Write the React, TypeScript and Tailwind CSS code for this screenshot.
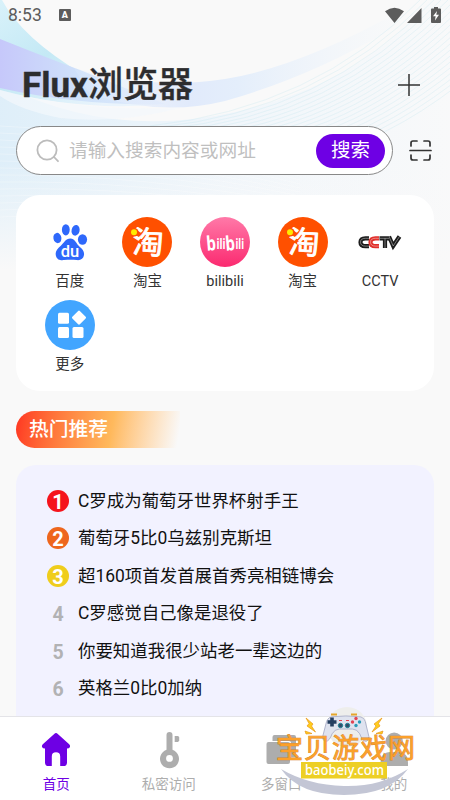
import type { ReactNode } from 'react';

const hotList = [
  'C罗成为葡萄牙世界杯射手王',
  '葡萄牙5比0乌兹别克斯坦',
  '超160项首发首展首秀亮相链博会',
  'C罗感觉自己像是退役了',
  '你要知道我很少站老一辈这边的',
  '英格兰0比0加纳',
];

const rankColors = ['bg-[#f5141c]', 'bg-[#ee661d]', 'bg-[#efcd1c]'];

export default function App() {
  return (
    <div className="relative flex h-[800px] w-[450px] flex-col overflow-hidden bg-[#f9f9f9] font-[Roboto,'Noto_Sans_CJK_SC',sans-serif]">
      <Waves />
      <StatusBar />

      <main className="relative flex min-h-0 flex-1 flex-col overflow-hidden px-4">
        <header className="flex h-[96px] items-center justify-between pt-[13px] pr-[13px] pl-[6px]">
          <h1 className="pt-0.5 text-[35px] leading-none font-bold text-[#2d2d2f] [-webkit-text-stroke:0.4px_#2d2d2f]">
            Flux<span className="font-medium">浏览器</span>
          </h1>
          <svg className="size-6" viewBox="0 0 24 24" stroke="#333" strokeWidth="1.5">
            <path d="M12 1v22M1 12h22" />
          </svg>
        </header>

        {/* Search */}
        <div className="flex items-center justify-between pr-0.5">
          <div className="flex h-[49px] w-[377px] items-center rounded-full border border-[#888] bg-white pr-[7px] pl-[19px]">
            <svg className="size-6" viewBox="0 0 24 24" fill="none" stroke="#bcbcbc" strokeWidth="1.8">
              <circle cx="11" cy="11" r="9.6" />
              <path d="m18 18 4 4.2" strokeLinecap="round" />
            </svg>
            <span className="ml-[9px] flex-1 pt-px text-[18.7px] leading-none whitespace-nowrap text-[#bfbfbf]">
              请输入搜索内容或网址
            </span>
            <button className="h-[34px] w-[69px] rounded-full bg-[#6e00e4] pt-px text-[19.5px] leading-none text-white">
              搜索
            </button>
          </div>
          <svg
            className="size-[23px]"
            viewBox="0 0 23 23"
            fill="none"
            stroke="#333"
            strokeWidth="1.7"
            strokeLinecap="round"
          >
            <path d="M2 7V4q0-2 2-2h4M15 2h4q2 0 2 2v3M2 16v3q0 2 2 2h4M15 21h4q2 0 2-2v-3M1 11.5h21" />
          </svg>
        </div>

        {/* Shortcuts */}
        <section className="mt-5 grid h-[196px] shrink-0 grid-cols-5 content-start rounded-[24px] bg-white px-[15px] pt-[22px]">
          <Shortcut label="百度">
            <BaiduLogo />
          </Shortcut>
          <Shortcut label="淘宝">
            <TaobaoLogo />
          </Shortcut>
          <Shortcut label="bilibili">
            <BilibiliLogo />
          </Shortcut>
          <Shortcut label="淘宝">
            <TaobaoLogo />
          </Shortcut>
          <Shortcut label="CCTV">
            <CctvLogo />
          </Shortcut>
          <Shortcut label="更多">
            <MoreLogo />
          </Shortcut>
        </section>

        <h2 className="mt-5 flex h-[37px] w-[164px] shrink-0 items-center rounded-l-full bg-linear-100 from-[#ff3322] via-[#ffb95c] via-58% to-[#f9f9f9] to-98% pl-[13px] text-[19.8px] leading-none font-medium text-white">
          热门推荐
        </h2>

        {/* Hot list */}
        <ol className="mt-[17px] flex-1 rounded-t-[20px] bg-[#f2f2ff] pt-[17px] pl-[31px]">
          {hotList.map((title, i) => (
            <li key={title} className="flex h-[37.5px] items-center">
              <Rank index={i} />
              <span className="ml-[9px] pt-px text-[17.45px] leading-none whitespace-nowrap text-[#111]">
                {title}
              </span>
            </li>
          ))}
        </ol>
      </main>

      <nav className="relative grid h-[84px] shrink-0 grid-cols-4 border-t border-[#e4e4e8] bg-white">
        <Tab label="首页" active>
          <path
            d="M18.2 4.9q1.8-1.6 3.6 0l11.4 10.3q1.4 1.4.6 3-.6 1.2-2.8 1.2v14q0 3.6-3.6 3.6h-3.2V27.5q0-4.2-4.2-4.2t-4.2 4.2V37h-3.2Q9 37 9 33.400V19.400q-2.200 0-2.800-1.200-.8-1.600.6-3z"
            fill="#6e00e4"
          />
        </Tab>
        <Tab label="私密访问">
          <path
            d="M20.500 3q3 0 3 3v14.800a9.500 9.500 0 1 1-6 0V6q0-3 3-3m0 23a3.400 3.400 0 1 0 0 6.800 3.400 3.400 0 0 0 0-6.800"
            fill="#adadad"
          />
          <path d="M25.700 7h3q1.500 0 1.500 1.500v3.300l-1.200 1.200h-3.300z" fill="#adadad" />
        </Tab>
        <Tab label="多窗口">
          <path d="M13.500 6H33q2 0 2 2v20h-5V14q0-2-2-2H11.500V8q0-2 2-2" fill="#adadad" />
          <rect x="5.500" y="13" width="23.500" height="22" rx="2" fill="#adadad" />
        </Tab>
        <Tab label="我的">
          <circle cx="20.200" cy="12" r="8.600" fill="#adadad" />
          <path d="M6.500 37v-3q0-11 10-11h7.500q10 0 10 11v3z" fill="#adadad" />
        </Tab>
      </nav>

      <Watermark />
    </div>
  );
}

function StatusBar() {
  return (
    <div className="relative flex h-[30px] shrink-0 items-center pr-[8px] pl-[8px] text-[#5c5c5c]">
      <span className="pt-0.5 text-[17.5px] leading-none">8:53</span>
      <span className="ml-[17px] flex size-3 items-center justify-center rounded-[1px] bg-[#5c5c5c] text-[9px] leading-none font-black text-white">
        A
      </span>
      <svg className="ml-auto h-4 w-[57px]" viewBox="0 0 57 16" fill="#5c5c5c">
        <path d="M0 4.200Q9.500-2.800 19 4.200L9.500 16zM36.500 1v15H22z" />
        <path d="M49 1.500V0h4v1.500h2q1 0 1 1V15q0 1-1 1h-8q-1 0-1-1V2.500q0-1 1-1z" />
        <path d="m52 4-4 5.200h2.600L50 13.500l4-5.700h-2.700z" fill="#fff" />
      </svg>
    </div>
  );
}

// Soft ribbons and fine curved lines behind the header
function Waves() {
  const lines = Array.from({ length: 20 }, (_, i) => i);

  return (
    <svg className="absolute inset-x-0 top-0" width="450" height="270" viewBox="0 0 450 270" fill="none">
      <defs>
        <linearGradient id="wash" x1="0" y1="0" x2="1" y2="0">
          <stop offset="0" stopColor="#d8ecf9" />
          <stop offset=".5" stopColor="#eef5fb" />
          <stop offset="1" stopColor="#f8f9fa" />
        </linearGradient>
        <linearGradient id="washFade" x1="0" y1="0" x2="0" y2="1">
          <stop offset=".6" stopColor="#f9f9f9" stopOpacity="0" />
          <stop offset="1" stopColor="#f9f9f9" />
        </linearGradient>
        <linearGradient id="cyan" x1="0" y1="0" x2="1" y2="1">
          <stop offset="0" stopColor="#d9f2fa" />
          <stop offset=".4" stopColor="#c4e9f5" />
          <stop offset=".8" stopColor="#eaf4fc" />
        </linearGradient>
        <linearGradient id="violet" x1="0" y1="0" x2="1" y2="0">
          <stop offset="0" stopColor="#c6c8fa" />
          <stop offset=".5" stopColor="#cfe2fa" />
          <stop offset="1" stopColor="#e2ecfc" />
        </linearGradient>
        <linearGradient id="ribbon" x1="0" y1="0" x2="1" y2="0">
          <stop offset="0" stopColor="#e6eefc" stopOpacity=".2" />
          <stop offset=".35" stopColor="#e1eafb" />
          <stop offset=".5" stopColor="#e4eefb" />
          <stop offset="1" stopColor="#f7f9fa" stopOpacity=".4" />
        </linearGradient>
      </defs>
      <path d="M0 84Q110 140 235 112T430 0h20v270H0z" fill="url(#wash)" opacity=".8" />
      <path d="M0 84Q110 140 235 112T430 0h20v270H0z" fill="url(#washFade)" />
      <path d="M2 0Q22 38 84 75L165 104Q80 112 0 90V0z" fill="url(#cyan)" />
      <path d="M0 39Q45 57 80 70L165 104Q80 106 0 88z" fill="url(#violet)" />
      <path d="M74 68Q150 91 225 79T402 10L390 30Q310 77 225 101 160 117 90 94z" fill="url(#ribbon)" />
      <path d="M0 90Q80 112 180 108 120 124 60 118 20 110 0 96z" fill="#f3f8fc" opacity=".7" />
      <g stroke="#b5e3ec" strokeWidth=".6" opacity=".4">
        {lines.map((i) => (
          <path
            key={i}
            d={`M${150 + i * 7} ${126 + i * 1.5}Q${315 + i * 4} ${108 + i * 3} ${420 + i * 7} 0`}
          />
        ))}
      </g>
      <g stroke="#fff" strokeWidth=".7" opacity=".4">
        {lines.slice(0, 14).map((i) => (
          <path key={i} d={`M0 ${126 + i * 7}Q140 ${132 + i * 6} 300 ${176 + i * 4}`} />
        ))}
      </g>
    </svg>
  );
}

function Shortcut({ label, children }: { label: string; children: ReactNode }) {
  return (
    <div className="flex h-[83px] flex-col items-center">
      <div className="size-[50px]">{children}</div>
      <span className="mt-[7px] text-[14.5px] leading-4 text-[#333]">{label}</span>
    </div>
  );
}

function BaiduLogo() {
  return (
    <svg className="size-full" viewBox="0 0 50 50" fill="#2e68fb">
      <ellipse cx="12.400" cy="21" rx="4" ry="5.200" transform="rotate(-10 12.400 21)" />
      <ellipse cx="20.800" cy="12.800" rx="3.900" ry="5.600" />
      <ellipse cx="30.600" cy="13.300" rx="4" ry="5.400" transform="rotate(12 30.600 13.300)" />
      <ellipse cx="37.500" cy="22.500" rx="4.600" ry="5.200" />
      <path d="M25.500 21.500c-5.200 0-6.200 4.300-9.700 7.200-4 3.300-6 6.300-4.800 10.200 1.100 3.900 4.500 4.600 8 4.200 4.500-.6 8.500-.6 12.500 0 4 .5 7-1 7.500-5 .6-5-3.200-6.900-5.800-9.800-2.300-2.700-3.600-6.800-7.700-6.800" />
      <text x="25" y="40" fill="#fff" fontSize="16.500" fontFamily="Roboto, sans-serif" fontWeight="500" textAnchor="middle">
        du
      </text>
    </svg>
  );
}

function TaobaoLogo() {
  return (
    <svg className="size-full" viewBox="0 0 50 50">
      <circle cx="25" cy="25" r="25" fill="#ff5000" />
      <text
        x="26"
        y="36.500"
        fill="#fff"
        stroke="#fff"
        strokeWidth=".9"
        strokeLinejoin="round"
        fontSize="31"
        fontFamily="'Noto Sans CJK SC', sans-serif"
        fontWeight="400"
        textAnchor="middle"
        transform="rotate(3 26 26)"
      >
        淘
      </text>
      <circle cx="12.300" cy="15.200" r="4.200" fill="#ff5000" />
      <circle cx="12" cy="15.200" r="3" fill="#ffeb00" />
    </svg>
  );
}

function BilibiliLogo() {
  return (
    <svg className="size-full" viewBox="0 0 50 50">
      <defs>
        <linearGradient id="pink" x1="0" y1="0" x2="0" y2="1">
          <stop offset="0" stopColor="#ff79a8" />
          <stop offset="1" stopColor="#fb2a70" />
        </linearGradient>
      </defs>
      <circle cx="25" cy="25" r="25" fill="url(#pink)" />
      <g fill="#fff" fontFamily="'Noto Sans', sans-serif" fontWeight="700">
        <text x="7" y="33.500" fontSize="20" transform="rotate(-5 10 33)">
          <tspan textLength="9.500" lengthAdjust="spacingAndGlyphs">b</tspan>
        </text>
        <text x="16.500" y="32" fontSize="14.500" textLength="9" lengthAdjust="spacingAndGlyphs">
          ili
        </text>
        <text x="26" y="33.500" fontSize="20" transform="rotate(-5 30 33)">
          <tspan textLength="9.500" lengthAdjust="spacingAndGlyphs">b</tspan>
        </text>
        <text x="35.500" y="32" fontSize="14.500" textLength="8.500" lengthAdjust="spacingAndGlyphs">
          ili
        </text>
      </g>
    </svg>
  );
}

function CctvLogo() {
  return (
    <svg className="size-full" viewBox="0 0 50 50" fill="none">
      <g stroke="#1c1c1c" strokeWidth="4.200">
        <path d="M14 21.300h-3.500q-5 0-5 3.900t5 3.900H14" />
        <path d="M24.500 21.300h9.500M30 21v10" />
        <path d="m34 19.500 4.200 9.500 6.300-9.500" />
      </g>
      <path d="M24 21.300h-3.500q-5 0-5 3.900t5 3.900H24" stroke="#e02f2a" strokeWidth="4.200" />
      <path
        d="M14 21.300h-3.500q-5 0-5 3.900t5 3.900H14M24 21.300h-3.500q-5 0-5 3.900t5 3.900H24M25 21.300h9M30 21.300V31M34 19.500l4.200 9.500 6.300-9.500"
        stroke="#fff"
        strokeWidth=".5"
        opacity=".8"
      />
    </svg>
  );
}

function MoreLogo() {
  return (
    <svg className="size-full" viewBox="0 0 50 50">
      <circle cx="25" cy="25" r="25" fill="#42a5ff" />
      <g fill="#fff">
        <rect x="13" y="12.700" width="11" height="11" rx="1.500" />
        <rect x="13" y="27" width="11" height="11" rx="1.500" />
        <rect x="27.500" y="27" width="11" height="11" rx="1.500" />
        <rect x="28.700" y="12.300" width="10.600" height="10.600" rx="1.200" transform="rotate(45 34 17.600)" />
      </g>
    </svg>
  );
}

function Rank({ index }: { index: number }) {
  if (index < 3) {
    return (
      <span
        className={`flex size-[22px] items-center justify-center rounded-full pt-0.5 text-[20px] leading-none font-bold text-white ${rankColors[index]}`}
      >
        {index + 1}
      </span>
    );
  }

  return (
    <span className="w-[22px] pt-[3px] text-center text-[19.5px] leading-none font-bold text-[#b2b2b4]">
      {index + 1}
    </span>
  );
}

function Tab({ label, active, children }: { label: string; active?: boolean; children: ReactNode }) {
  return (
    <div className="flex flex-col items-center pt-[12px]">
      <svg className="size-10" viewBox="0 0 40 40">
        {children}
      </svg>
      <span className={`mt-[7px] text-[13.5px] leading-4 ${active ? 'text-[#6e00e4]' : 'text-[#adadad]'}`}>
        {label}
      </span>
    </div>
  );
}

function Watermark() {
  return (
    <svg className="absolute top-[700px] left-[270px]" width="150" height="100" viewBox="0 0 150 100">
      <circle cx="77" cy="27" r="20" fill="#eeeeec" />
      <path d="M11 69Q38 85 74 86t64-17Q119 95 74 95T11 69" fill="#c3c6d5" />
      <path
        d="M62 16.500q14-1.500 28 0 5 0 7 5l4 16q0 4-3 5-4 0-7-8-3-5-8-5H69q-5 0-8 5-3 8-7 8-4-1-3-6l4-15q2-5 7-5"
        fill="#dfe3ef"
        stroke="#acb1c9"
        transform="translate(6 1) scale(.92 .95)"
      />
      <path d="M57.500 22h9M62 17.500v9" stroke="#243e60" strokeWidth="3.600" />
      <g fill="#e34353">
        <circle cx="86" cy="18.500" r="1.700" />
        <circle cx="82.500" cy="22" r="1.700" />
      </g>
      <g fill="#299bb8">
        <circle cx="89.500" cy="22" r="1.700" />
        <circle cx="86" cy="25.500" r="1.700" />
      </g>
      <g fill="#334b69" stroke="#218698">
        <circle cx="70.500" cy="25.500" r="2.200" />
        <circle cx="77.500" cy="25.500" r="2.200" />
      </g>
      <path d="M69 20.500h3M76 20.500h3" stroke="#e34353" strokeWidth="1.200" />
      <path d="M61 14.500h6M81 14.500h6" stroke="#e5a52b" strokeWidth="2" />
      <path
        d="m36 18 7 6-1.500 2 4 6-8.500-6 2-2.500zM112 18l-8 6 2 2-4 6 8-6-1.500-2.500zM35 31l7 2.500-6 .5zM113 31l-7 2.500 6 .5z"
        fill="#ffcd1d"
        stroke="#e99619"
        strokeWidth=".7"
      />
      <text
        x="6"
        y="57.500"
        fill="#fba02b"
        stroke="#d5842a"
        strokeWidth=".8"
        paintOrder="stroke"
        fontSize="27"
        fontFamily="'Noto Sans CJK SC', sans-serif"
        fontWeight="400"
        textLength="139"
      >
        宝贝游戏网
      </text>
      <rect x="31" y="62" width="86" height="16.500" fill="#edcf25" />
      <text
        x="35"
        y="74.500"
        fill="#fff"
        fontSize="14"
        fontFamily="'Noto Sans', sans-serif"
        fontWeight="500"
        textLength="79"
        lengthAdjust="spacingAndGlyphs"
      >
        baobeiy.com
      </text>
    </svg>
  );
}
